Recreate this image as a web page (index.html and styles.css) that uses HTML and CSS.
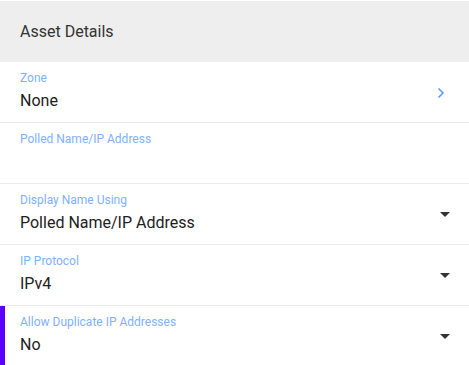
FILE: index.html
```html
<!DOCTYPE html>
<html lang="en">
<head>
    <meta charset="UTF-8">
    <meta name="viewport" content="width=device-width, initial-scale=1.0">
    <title>Asset Details</title>
    <link rel="stylesheet" href="styles.css">
</head>
<body>
    <div class="panel">
        <div class="panel-header">Asset Details</div>
        <div class="field">
            <div class="field-body">
                <div class="field-label">Zone</div>
                <div class="field-value">None</div>
            </div>
            <svg class="chevron" width="8" height="12" viewBox="0 0 8 12"><path d="M1.5 1.5 L6 6 L1.5 10.5" fill="none" stroke="#5c9dff" stroke-width="1.6"/></svg>
        </div>
        <div class="field">
            <div class="field-body">
                <div class="field-label">Polled Name/IP Address</div>
                <div class="field-value"></div>
            </div>
        </div>
        <div class="field">
            <div class="field-body">
                <div class="field-label">Display Name Using</div>
                <div class="field-value">Polled Name/IP Address</div>
            </div>
            <span class="caret"></span>
        </div>
        <div class="field">
            <div class="field-body">
                <div class="field-label">IP Protocol</div>
                <div class="field-value">IPv4</div>
            </div>
            <span class="caret"></span>
        </div>
        <div class="field field-active">
            <div class="field-body">
                <div class="field-label">Allow Duplicate IP Addresses</div>
                <div class="field-value">No</div>
            </div>
            <span class="caret"></span>
        </div>
    </div>
</body>
</html>
```

FILE: styles.css
```css
body {
    margin: 0;
    font-family: Roboto, "Liberation Sans", sans-serif;
    background-color: #fff;
}
.panel {
    padding-top: 1px;
}
.panel-header {
    height: 61px;
    display: flex;
    align-items: center;
    padding-left: 20px;
    font-size: 16px;
    color: #333;
    background-color: #eeeeee;
}
.field {
    position: relative;
    display: flex;
    align-items: center;
    height: 60px;
    padding: 0 19px 0 20px;
    border-bottom: 1px solid #ebebeb;
}
.field-body {
    flex: 1;
    align-self: flex-start;
    padding-top: 8px;
}
.field-label {
    font-size: 12px;
    line-height: 16px;
    color: #7fb0ff;
}
.field-value {
    margin-top: 4px;
    font-size: 16px;
    line-height: 22px;
    min-height: 22px;
    color: #212121;
}
.chevron {
    margin-right: 5px;
    margin-top: 2px;
}
.caret {
    width: 0;
    height: 0;
    margin-top: 1px;
    border-left: 5px solid transparent;
    border-right: 5px solid transparent;
    border-top: 5px solid #333;
}
.field-active::before {
    content: "";
    position: absolute;
    left: 0;
    top: 0;
    bottom: 0;
    width: 5px;
    background-color: #5a00ff;
}
```
